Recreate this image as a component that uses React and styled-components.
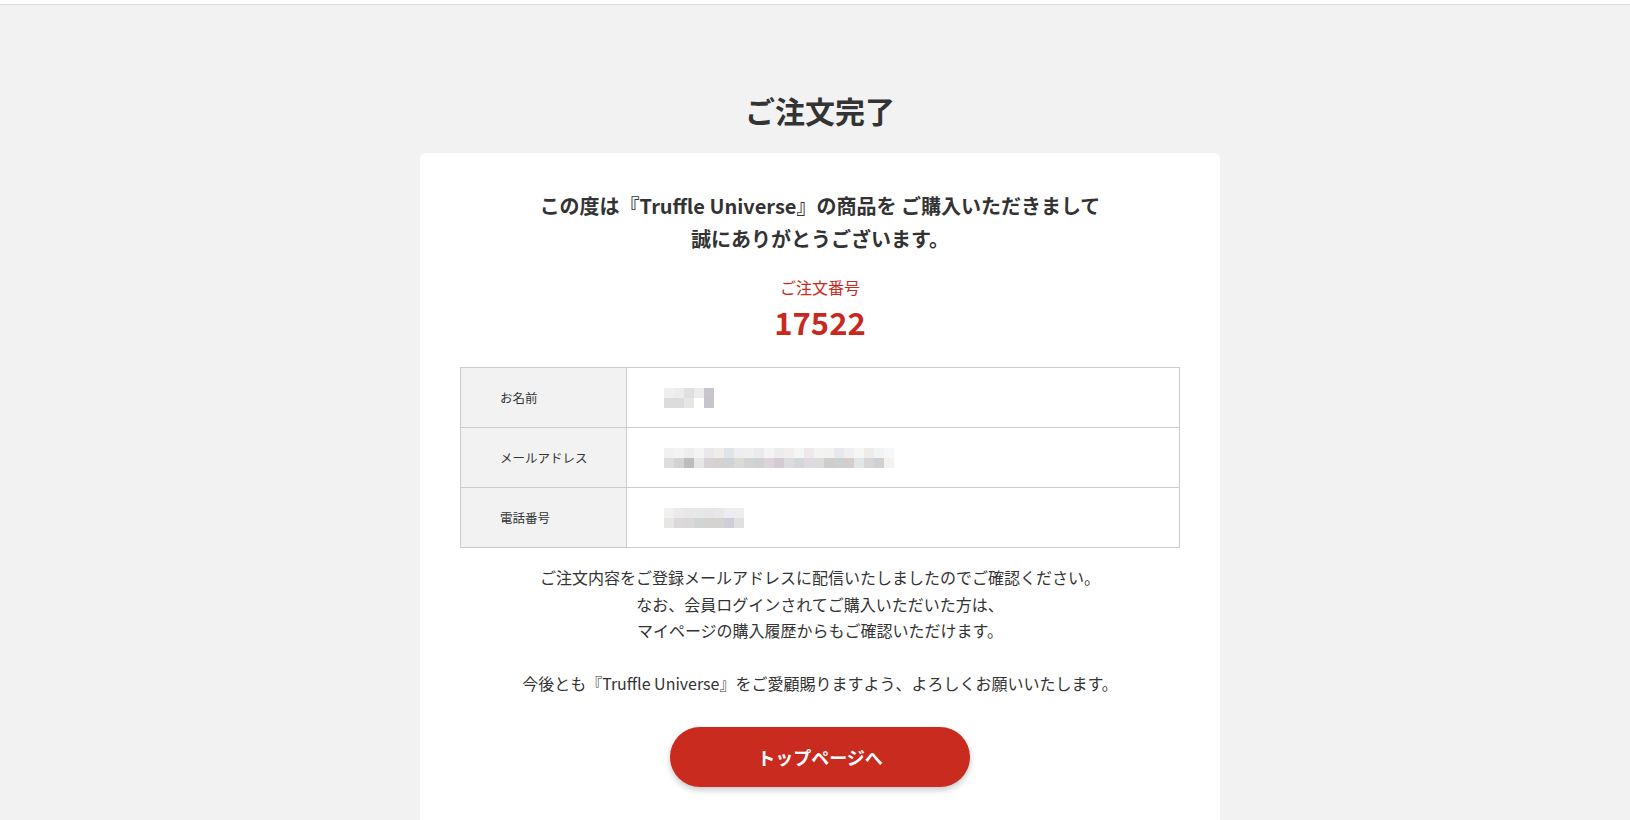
import React from "react";
import styled, { createGlobalStyle } from "styled-components";

const GlobalStyle = createGlobalStyle`
  html, body {
    margin: 0;
    padding: 0;
    background: #f2f2f2;
    color: #333;
    font-family: "Noto Sans CJK JP", "Noto Sans", sans-serif;
  }
  * { box-sizing: border-box; }
`;

const TopBar = styled.div`
  height: 5px;
  background: #fff;
  border-bottom: 1px solid #dcdcdc;
`;

const Main = styled.main`
  display: flex;
  flex-direction: column;
  align-items: center;
  padding: 83px 0 0 10px;
`;

const Title = styled.h1`
  margin: 0 0 20px;
  font-size: 30px;
  line-height: 45px;
  font-weight: 700;
  color: #333;
`;

const Card = styled.section`
  width: 800px;
  background: #fff;
  border-radius: 6px 6px 0 0;
  padding: 36px 40px 40px;
  display: flex;
  flex-direction: column;
  align-items: center;
`;

const Lead = styled.p`
  margin: 0;
  font-size: 20px;
  line-height: 33px;
  font-weight: 700;
  text-align: center;
  color: #333;
`;

const OrderLabel = styled.div`
  margin-top: 20px;
  font-size: 16px;
  line-height: 24px;
  color: #c9281e;
`;

const OrderNumber = styled.div`
  margin-top: 3px;
  font-size: 31px;
  line-height: 40px;
  font-weight: 700;
  color: #c9281e;
`;

const InfoTable = styled.table`
  margin-top: 25px;
  width: 720px;
  border-collapse: collapse;
  font-size: 12.5px;
`;

const Label = styled.th`
  width: 166px;
  height: 60px;
  padding: 0 0 0 39px;
  text-align: left;
  font-weight: 400;
  background: #f2f2f2;
  border: 1px solid #cccccc;
  color: #333;
`;

const Value = styled.td`
  height: 60px;
  padding: 0 0 0 37px;
  border: 1px solid #cccccc;
`;

const Mosaic = styled.div`
  display: grid;
  grid-template-columns: repeat(${(p) => p.$cols}, 10px);
  grid-auto-rows: 10px;
`;

const Tile = styled.span`
  display: block;
`;

const Note = styled.p`
  margin: 16px 0 0;
  font-size: 16px;
  line-height: 26.5px;
  text-align: center;
  color: #333;
`;

const TopButton = styled.a`
  margin-top: 30px;
  width: 300px;
  height: 60px;
  border-radius: 30px;
  background: #c92b1f;
  color: #fff;
  font-size: 18px;
  font-weight: 700;
  display: flex;
  align-items: center;
  justify-content: center;
  text-decoration: none;
  box-shadow: 0 3px 6px rgba(0, 0, 0, 0.22);
  cursor: pointer;
`;

const top = ["#f1f1f1", "#f4f3f3", "#eeeeee", "#f3f4f6", "#ebe8ea", "#efedec", "#e2e3e6", "#eeedf0", "#f0efef", "#ebeaee", "#f4f4f4", "#ecebee", "#f0efee", "#f5f5f5", "#ece8ec", "#f3f3f2", "#f2f2f0", "#e8e8ec", "#efeef0", "#f6f6f6", "#eeecea", "#f2f3f5", "#f6f7f9"];
const bottom = ["#dedddd", "#d4d3d3", "#bebdbc", "#e6e6e6", "#d7d2d5", "#d6d0cf", "#ced3d7", "#d9dcd6", "#d2d4d4", "#ced2d3", "#dbd5db", "#d4cad1", "#dcdbe0", "#d3d7da", "#e0d9e0", "#dcdcdc", "#cfcccd", "#cdcfd0", "#d6cccb", "#e3e6e9", "#d6d6d8", "#d0cfd3", "#f3f2ef"];

const nameTop = ["#efefef", "#ececec", "#dfdfdf", "#ececec", "#c8c5cc"];
const nameBottom = ["#dddcdd", "#dcdcdc", "#e6e7e4", "#fffffb", "#c7c4cb"];
const telTop = ["#f0f0ef", "#ebe9ea", "#e8e7e8", "#e8e8e8", "#e6e6e6", "#e8e8e8", "#ededf0", "#eeeded"];
const telBottom = ["#e6e6e4", "#dcd9db", "#dad8d9", "#d2d6d2", "#d4d3d0", "#d5d2d2", "#d0ced5", "#e0dfe1"];

const Pixelated = ({ rows }) => (
  <Mosaic $cols={rows[0].length}>
    {rows.flat().map((c, i) => (
      <Tile key={i} style={{ background: c }} />
    ))}
  </Mosaic>
);

const App = () => (
  <>
    <GlobalStyle />
    <TopBar />
    <Main>
      <Title>ご注文完了</Title>
      <Card>
        <Lead>
          この度は『Truffle Universe』の商品を ご購入いただきまして
          <br />
          誠にありがとうございます。
        </Lead>
        <OrderLabel>ご注文番号</OrderLabel>
        <OrderNumber>17522</OrderNumber>
        <InfoTable>
          <tbody>
            <tr>
              <Label>お名前</Label>
              <Value>
                <Pixelated rows={[nameTop, nameBottom]} />
              </Value>
            </tr>
            <tr>
              <Label>メールアドレス</Label>
              <Value>
                <Pixelated rows={[top, bottom]} />
              </Value>
            </tr>
            <tr>
              <Label>電話番号</Label>
              <Value>
                <Pixelated rows={[telTop, telBottom]} />
              </Value>
            </tr>
          </tbody>
        </InfoTable>
        <Note>
          ご注文内容をご登録メールアドレスに配信いたしましたのでご確認ください。
          <br />
          なお、会員ログインされてご購入いただいた方は、
          <br />
          マイページの購入履歴からもご確認いただけます。
          <br />
          <br />
          今後とも『Truffle Universe』をご愛顧賜りますよう、よろしくお願いいたします。
        </Note>
        <TopButton href="#">トップページへ</TopButton>
      </Card>
    </Main>
  </>
);

export default App;
